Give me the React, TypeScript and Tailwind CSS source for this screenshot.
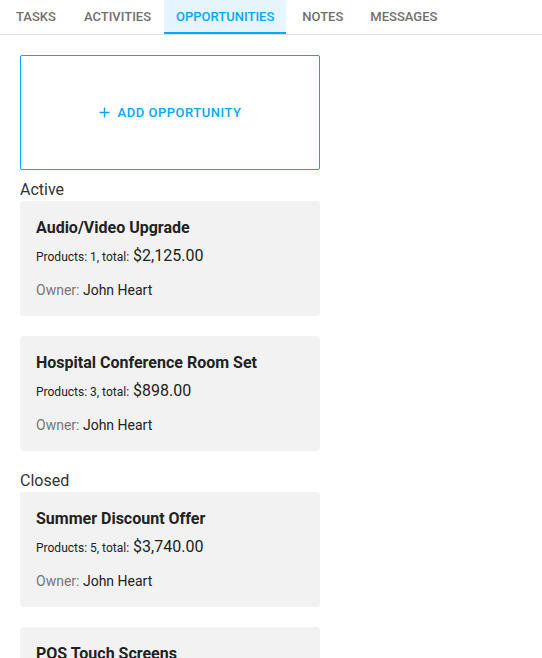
import React from "react";

const tabs = [
  { label: "Tasks", ml: "ml-1" },
  { label: "Activities", ml: "ml-1" },
  { label: "Opportunities", ml: "ml-[1px]" },
  { label: "Notes", ml: "ml-1" },
  { label: "Messages", ml: "ml-[3px]" },
];

interface Opportunity {
  name: string;
  products: number;
  total: string;
  owner: string;
}

const active: Opportunity[] = [
  { name: "Audio/Video Upgrade", products: 1, total: "$2,125.00", owner: "John Heart" },
  { name: "Hospital Conference Room Set", products: 3, total: "$898.00", owner: "John Heart" },
];

const closed: Opportunity[] = [
  { name: "Summer Discount Offer", products: 5, total: "$3,740.00", owner: "John Heart" },
  { name: "POS Touch Screens", products: 2, total: "$1,540.00", owner: "John Heart" },
];

const OpportunityCard: React.FC<{ item: Opportunity }> = ({ item }) => (
  <div className="h-[115px] w-[300px] shrink-0 rounded bg-[#f2f2f2] px-4 pt-[15px]">
    <div className="text-[16px] font-bold leading-6 text-[#222]">{item.name}</div>
    <div className="mt-[4px] flex items-baseline gap-1 text-[#222]">
      <span className="text-[12px]">Products: {item.products}, total:</span>
      <span className="text-[16px]">{item.total}</span>
    </div>
    <div className="mt-[12px] text-[14px]">
      <span className="text-[#777]">Owner: </span>
      <span className="text-[#222]">{item.owner}</span>
    </div>
  </div>
);

export default function App() {
  return (
    <div
      className="h-[658px] w-[542px] overflow-hidden bg-white"
      style={{ fontFamily: "Roboto, 'Liberation Sans', sans-serif" }}
    >
      <div className="flex h-[35px] border-b border-[#e0e0e0]">
        {tabs.map((t) => {
          const on = t.label === "Opportunities";
          return (
            <div
              key={t.label}
              className={`${t.ml} flex h-[34px] items-center px-3 text-[13px] font-medium uppercase ${
                on
                  ? "border-b-2 border-[#03a9f4] bg-[#e6f5fd] pt-[2px] text-[#03a9f4]"
                  : "text-[#707070]"
              }`}
            >
              {t.label}
            </div>
          );
        })}
      </div>

      <div className="flex flex-col px-5 pt-5">
        <button className="flex h-[115px] w-[300px] shrink-0 items-center justify-center gap-2 rounded-[2px] border border-[#03a9f4] text-[13px] font-medium tracking-[0.04em] text-[#03a9f4]">
          <svg width="11" height="11" viewBox="0 0 11 11">
            <path d="M5.5 0.5v10M0.5 5.5h10" stroke="#03a9f4" strokeWidth="1.4" />
          </svg>
          ADD OPPORTUNITY
        </button>

        <div className="mt-[10px] text-[16px] leading-5 text-[#333]">Active</div>
        <div className="mt-[1px] flex flex-col gap-5">
          {active.map((o) => (
            <OpportunityCard key={o.name} item={o} />
          ))}
        </div>

        <div className="mt-[20px] text-[16px] leading-5 text-[#333]">Closed</div>
        <div className="mt-[1px] flex flex-col gap-5">
          {closed.map((o) => (
            <OpportunityCard key={o.name} item={o} />
          ))}
        </div>
      </div>
    </div>
  );
}
